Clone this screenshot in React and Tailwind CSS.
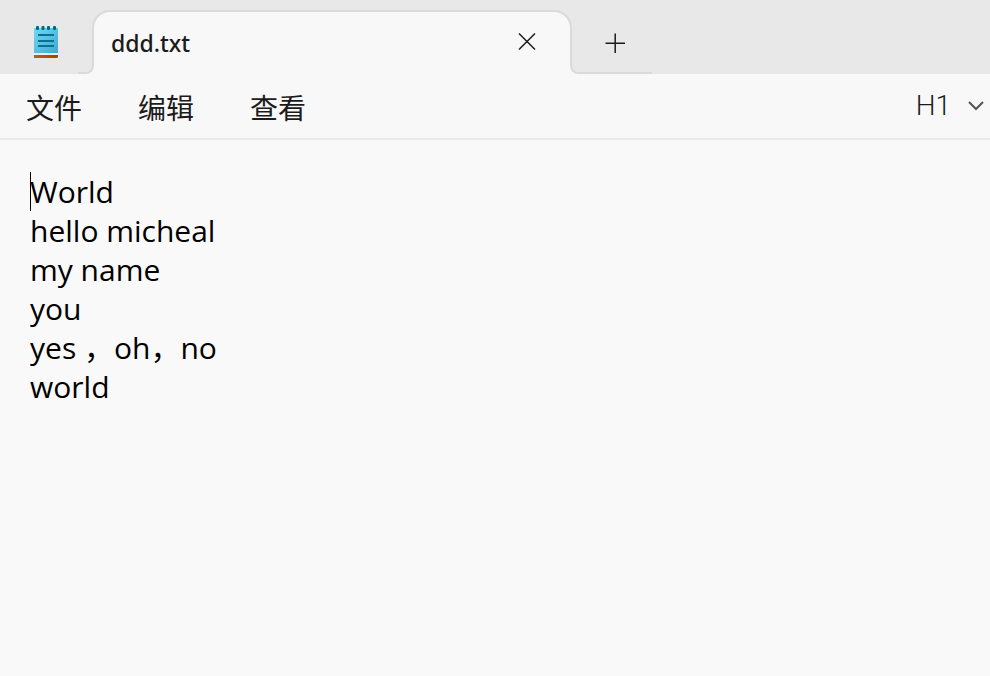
import React from "react";

const TEXT = "World\nhello micheal\nmy name\nyou\nyes ，oh，no\nworld";
const MENUS = ["文件", "编辑", "查看"];

function NotepadIcon() {
  return (
    <svg width="24" height="34" viewBox="0 0 24 34" aria-hidden="true">
      <defs>
        <linearGradient id="page" x1="0" y1="0" x2="1" y2="1">
          <stop offset="0" stopColor="#70d8f3" />
          <stop offset="1" stopColor="#42a9cd" />
        </linearGradient>
        <linearGradient id="base" x1="0" y1="0" x2="1" y2="0">
          <stop offset="0" stopColor="#b95f18" />
          <stop offset="1" stopColor="#9c4504" />
        </linearGradient>
      </defs>
      <path d="M0 28h24v5l-1 1H0z" fill="#e9eef0" />
      <path d="M0 31h24v2l-1 1H0z" fill="url(#base)" />
      <rect y="4" width="24" height="25" rx="0.5" fill="url(#page)" />
      <g fill="#086587">
        <rect x="2" y="2" width="3" height="4" rx="1" />
        <rect x="7.500" y="2" width="3" height="4" rx="1" />
        <rect x="13" y="2" width="3" height="4" rx="1" />
        <rect x="19" y="2" width="3" height="4" rx="1" />
      </g>
      <path d="M4 11h16M4 17h16M4 22h16" stroke="#087296" strokeWidth="2" />
    </svg>
  );
}

function TitleBar() {
  return (
    <header className="flex h-[74px] items-end bg-[#e8e8e8]">
      <div className="flex w-[92px] shrink-0 justify-center self-stretch pt-6">
        <NotepadIcon />
      </div>
      <div className="relative flex h-16 w-[480px] items-center rounded-t-[18px] border-x-2 border-t-2 border-[#dadada] bg-[#f8f8f8] pr-8 pl-[17px]">
        <span className="absolute bottom-0 -left-4 h-2 w-4 bg-[#f8f8f8]">
          <span className="block h-2 w-4 rounded-br-[8px] border-r-2 border-b-2 border-[#dadada] bg-[#e8e8e8]" />
        </span>
        <span className="absolute -right-[82px] bottom-0 h-2 w-[82px] bg-[#f8f8f8]">
          <span className="block h-2 w-[82px] rounded-bl-[8px] border-b-2 border-l-2 border-[#dadada] bg-[#e8e8e8]" />
        </span>
        <span className="flex-1 text-[23px] leading-8 font-medium">ddd.txt</span>
        <button type="button" aria-label="Close tab" className="pb-1">
          <svg width="20" height="20" viewBox="0 0 20 20" fill="none" stroke="#1b1b1b" strokeWidth="1.5">
            <path d="M1 2.500l16 16M17 2.500L1 18.500" />
          </svg>
        </button>
      </div>
      <button type="button" aria-label="New tab" className="z-10 ml-8 flex h-[62px] items-center">
        <svg width="22" height="62" viewBox="0 0 22 62" fill="none" stroke="#1b1b1b" strokeWidth="1.5">
          <path d="M1.500 31.200h19.500M11.200 21.500v19.500" />
        </svg>
      </button>
    </header>
  );
}

function MenuBar() {
  return (
    <nav className="flex h-[66px] items-center justify-between border-b-2 border-[#eaeaea] bg-[#f8f8f8] pr-1 pl-[26px]">
      <div className="flex gap-14 pt-1">
        {MENUS.map((m) => (
          <button key={m} type="button" className="text-[28px] leading-10">
            {m}
          </button>
        ))}
      </div>
      <button type="button" aria-label="Heading level" className="flex items-center gap-4">
        <span className="font-['Roboto'] text-[28px] leading-8 font-light">H1</span>
        <svg width="19" height="12" viewBox="0 0 19 12" fill="none" stroke="#555" strokeWidth="2">
          <path d="M2 2l7 7 7-7" />
        </svg>
      </button>
    </nav>
  );
}

export default function App() {
  return (
    <div className="flex min-h-screen flex-col bg-[#f9f9f9] font-['Noto_Sans','Noto_Sans_CJK_SC',sans-serif] text-[#1b1b1b]">
      <TitleBar />
      <MenuBar />
      <main className="relative flex flex-1 pt-8 pl-[30px]">
        <span className="absolute h-[39px] w-px bg-black" />
        <textarea
          aria-label="Document"
          spellCheck={false}
          defaultValue={TEXT}
          className="flex-1 resize-none bg-transparent font-['Open_Sans','Noto_Sans_CJK_SC',sans-serif] text-[30px] leading-[39px] text-black caret-transparent outline-none"
        />
      </main>
    </div>
  );
}
